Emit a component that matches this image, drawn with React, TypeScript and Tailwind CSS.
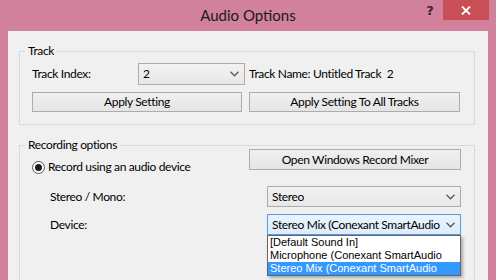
import React from "react";

function Chevron() {
  return (
    <svg width="9" height="6" viewBox="0 0 9 6" className="shrink-0">
      <polyline points="0.5,0.8 4.5,4.8 8.5,0.8" fill="none" stroke="#5a5a5a" strokeWidth="1.3" />
    </svg>
  );
}

function Combo({ value, className, focused }: { value: string; className: string; focused?: boolean }) {
  return (
    <div
      className={`${className} flex items-center justify-between pl-[4px] pr-[5px] border ${
        focused
          ? "border-[#569de5] bg-gradient-to-b from-[#ecf4fc] to-[#dcecfc]"
          : "border-[#acacac] bg-gradient-to-b from-[#f2f2f2] to-[#e8e8e8]"
      }`}
    >
      <span className="overflow-hidden whitespace-nowrap">{value}</span>
      <Chevron />
    </div>
  );
}

function Button({ label, className }: { label: string; className: string }) {
  return (
    <div
      className={`${className} flex items-center justify-center border border-[#acacac] bg-gradient-to-b from-[#f0f0f0] to-[#e5e5e5]`}
    >
      {label}
    </div>
  );
}

export default function App() {
  const devices = ["[Default Sound In]", "Microphone (Conexant SmartAudio", "Stereo Mix (Conexant SmartAudio"];

  return (
    <div className="w-[496px] h-[280px] overflow-hidden bg-[#d1819c] flex flex-col font-['Lato',sans-serif] text-[12px] text-black">
      {/* title bar */}
      <div className="h-[31px] shrink-0 grid grid-cols-[90px_1fr_90px]">
        <div />
        <div className="text-center text-[15px] leading-[31px] text-[#1a1a1a]">Audio Options</div>
        <div className="flex items-start justify-end pr-[7px]">
          <div className="w-[22px] h-[20px] flex items-center justify-center font-bold text-[13px] text-[#3a2430] font-['DejaVu_Sans',sans-serif] mr-[2px] mt-[1px]">
            ?
          </div>
          <div className="w-[46px] h-[20px] bg-[#c74f55] flex items-center justify-center">
            <svg width="10" height="9" viewBox="0 0 10 9">
              <path d="M1 0.5 L9 8.5 M9 0.5 L1 8.5" stroke="#ffffff" strokeWidth="1.8" />
            </svg>
          </div>
        </div>
      </div>

      {/* client area */}
      <div className="flex-1 min-h-0 mx-[8px] bg-[#f0f0f0] pl-[11px] pr-[13px] pt-[12px] tracking-[-0.35px]">
        <fieldset className="border border-[#d9d9d9] pl-[12px] pr-[14px] pb-[12px]">
          <legend className="-ml-[7px] px-[3px] leading-[16px]">Track</legend>
          <div className="flex items-center mt-[4px] h-[22px]">
            <span className="w-[106px]">Track Index:</span>
            <Combo value="2" className="w-[107px] h-[22px]" />
            <span className="ml-[4px] whitespace-pre">Track Name: Untitled Track  2</span>
          </div>
          <div className="flex gap-[7px] mt-[7px]">
            <Button label="Apply Setting" className="w-[210px] h-[20px]" />
            <Button label="Apply Setting To All Tracks" className="w-[211px] h-[20px]" />
          </div>
        </fieldset>

        <fieldset className="mt-[12px] border border-[#d9d9d9] pl-[12px] pr-[13px] pb-[80px]">
          <legend className="-ml-[7px] px-[3px] leading-[16px]">Recording options</legend>
          <div className="flex items-start justify-between -mt-[4px]">
            <div className="flex items-center gap-[3px] mt-[10px] h-[16px]">
              <span className="w-[13px] h-[13px] rounded-full border border-[#555555] bg-white flex items-center justify-center">
                <span className="w-[7px] h-[7px] rounded-full bg-[#1c1c1c]" />
              </span>
              <span>Record using an audio device</span>
            </div>
            <Button label="Open Windows Record Mixer" className="w-[212px] h-[21px]" />
          </div>
          <div className="flex items-center pl-[18px] mt-[11px]">
            <span className="w-[217px]">Stereo / Mono:</span>
            <Combo value="Stereo" className="w-[194px] h-[21px]" />
          </div>
          <div className="flex items-center pl-[18px] mt-[7px]">
            <span className="w-[217px]">Device:</span>
            <div className="relative">
              <Combo value="Stereo Mix (Conexant SmartAudio" className="w-[194px] h-[21px]" focused />
              <div className="absolute left-0 top-full w-[194px] bg-white border border-[#646464] shadow-[2px_2px_3px_rgba(0,0,0,0.3)] font-['Liberation_Sans',sans-serif] text-[11px] tracking-normal">
                {devices.map((d, i) => (
                  <div
                    key={d}
                    className={`h-[13px] leading-[13px] pl-[2px] whitespace-nowrap ${
                      i === devices.length - 1 ? "bg-[#3399ff] text-white" : ""
                    }`}
                  >
                    {d}
                  </div>
                ))}
              </div>
            </div>
          </div>
        </fieldset>
      </div>
    </div>
  );
}
